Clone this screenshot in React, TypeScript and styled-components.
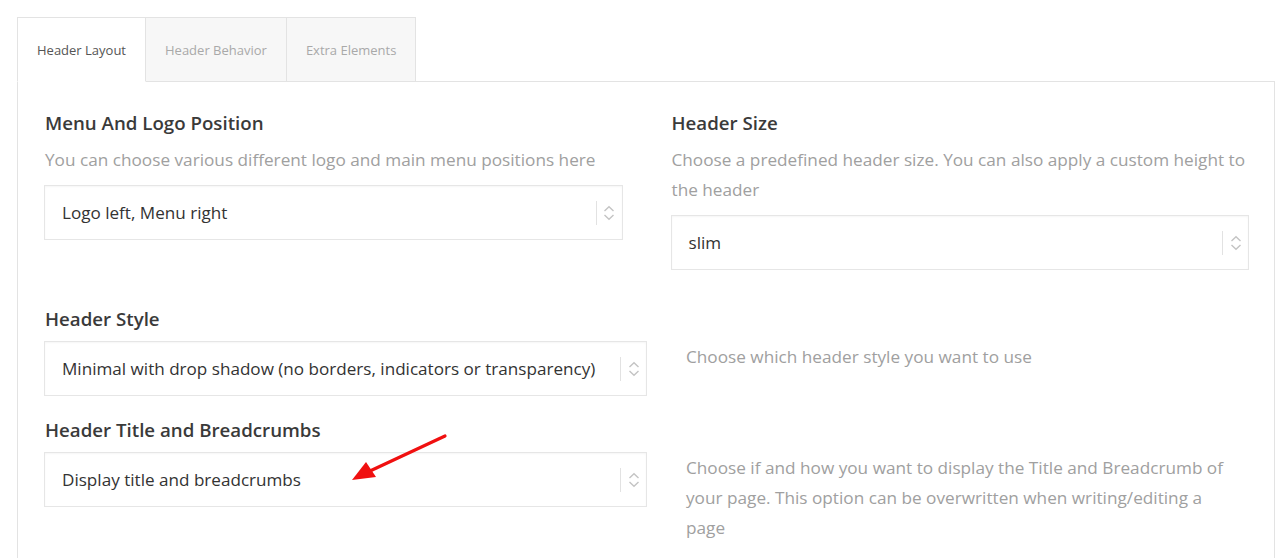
import React from "react";
import styled, { createGlobalStyle } from "styled-components";

const Global = createGlobalStyle`
  html, body { margin: 0; padding: 0; background: #fff; }
  body { font-family: "Open Sans", "Noto Sans", sans-serif; color: #333; }
  * { box-sizing: border-box; }
`;

const Page = styled.div`
  padding: 17px 4px 0 17px;
`;

const Tabs = styled.div`
  display: flex;
  position: relative;
  z-index: 1;
`;

const Tab = styled.div<{ $active?: boolean }>`
  height: 65px;
  padding: 0 19px 0 19px;
  display: flex;
  align-items: center;
  font-size: 13px;
  color: ${(p) => (p.$active ? "#555" : "#a9a9a9")};
  background: ${(p) => (p.$active ? "#fff" : "#f7f7f7")};
  border: 1px solid #e3e3e3;
  border-left-width: ${(p) => (p.$active ? "1px" : "0")};
  border-bottom-color: ${(p) => (p.$active ? "#fff" : "#e3e3e3")};
`;

const Panel = styled.div`
  border: 1px solid #e3e3e3;
  margin-top: -1px;
  padding: 29px 25px 40px 26px;
  min-height: 500px;
`;

const RowTwo = styled.div`
  display: grid;
  grid-template-columns: 1fr 1fr;
  column-gap: 48px;
  margin-bottom: 37px;
`;

const RowSide = styled.div`
  display: grid;
  grid-template-columns: 603px 1fr;
  column-gap: 39px;
  margin-bottom: 22px;
`;

const Field = styled.div`
  display: flex;
  flex-direction: column;
`;

const Title = styled.div`
  font-size: 18.7px;
  font-weight: 600;
  line-height: 24px;
  color: #3a3a3a;
  margin-bottom: 10px;
  padding-left: 1px;
`;

const Desc = styled.div<{ $side?: boolean }>`
  font-size: 17.2px;
  line-height: 30px;
  color: #a0a0a0;
  margin-bottom: 10px;
  padding-left: ${(p) => (p.$side ? "0" : "1px")};
  padding-top: ${(p) => (p.$side ? "35px" : "0")};
  padding-right: ${(p) => (p.$side ? "20px" : "0")};
`;

const SelectBox = styled.div`
  position: relative;
  height: 55px;
  border: 1px solid #e6e6e6;
  box-shadow: inset 0 1px 2px rgba(0, 0, 0, 0.04);
  display: flex;
  align-items: center;
  padding-left: 17px;
  font-size: 17.1px;
  color: #333;
  background: #fff;
`;

const SelectText = styled.span`
  flex: 1;
`;

const Arrows = styled.div`
  width: 26px;
  height: 24px;
  border-left: 1px solid #e2e2e2;
  display: flex;
  align-items: center;
  justify-content: center;
`;

const Annotation = styled.svg`
  position: absolute;
  left: 303px;
  top: -20px;
  pointer-events: none;
`;

const Chevrons = () => (
  <svg width="12" height="16" viewBox="0 0 12 16">
    <path d="M1.5 6 L6 1.8 L10.5 6" fill="none" stroke="#c4c4c4" strokeWidth="1.4" />
    <path d="M1.5 10 L6 14.2 L10.5 10" fill="none" stroke="#c4c4c4" strokeWidth="1.4" />
  </svg>
);

const Select = ({ value, children }: { value: string; children?: React.ReactNode }) => (
  <SelectBox>
    <SelectText>{value}</SelectText>
    <Arrows>
      <Chevrons />
    </Arrows>
    {children}
  </SelectBox>
);

export default function App() {
  return (
    <>
      <Global />
      <Page>
        <Tabs>
          <Tab $active>Header Layout</Tab>
          <Tab>Header Behavior</Tab>
          <Tab>Extra Elements</Tab>
        </Tabs>
        <Panel>
          <RowTwo>
            <Field>
              <Title>Menu And Logo Position</Title>
              <Desc>You can choose various different logo and main menu positions here</Desc>
              <Select value="Logo left, Menu right" />
            </Field>
            <Field>
              <Title>Header Size</Title>
              <Desc>
                Choose a predefined header size. You can also apply a custom height to the header
              </Desc>
              <Select value="slim" />
            </Field>
          </RowTwo>
          <RowSide>
            <Field>
              <Title>Header Style</Title>
              <Select value="Minimal with drop shadow (no borders, indicators or transparency)" />
            </Field>
            <Desc $side>Choose which header style you want to use</Desc>
          </RowSide>
          <RowSide>
            <Field>
              <Title>Header Title and Breadcrumbs</Title>
              <Select value="Display title and breadcrumbs">
                <Annotation width="100" height="50" viewBox="0 0 100 50">
                  <line x1="97" y1="3" x2="22" y2="38" stroke="#f01010" strokeWidth="3.2" strokeLinecap="round" />
                  <polygon points="4,47 18,29 28,44" fill="#f01010" />
                </Annotation>
              </Select>
            </Field>
            <Desc $side>
              Choose if and how you want to display the Title and Breadcrumb of your page. This
              option can be overwritten when writing/editing a page
            </Desc>
          </RowSide>
        </Panel>
      </Page>
    </>
  );
}
